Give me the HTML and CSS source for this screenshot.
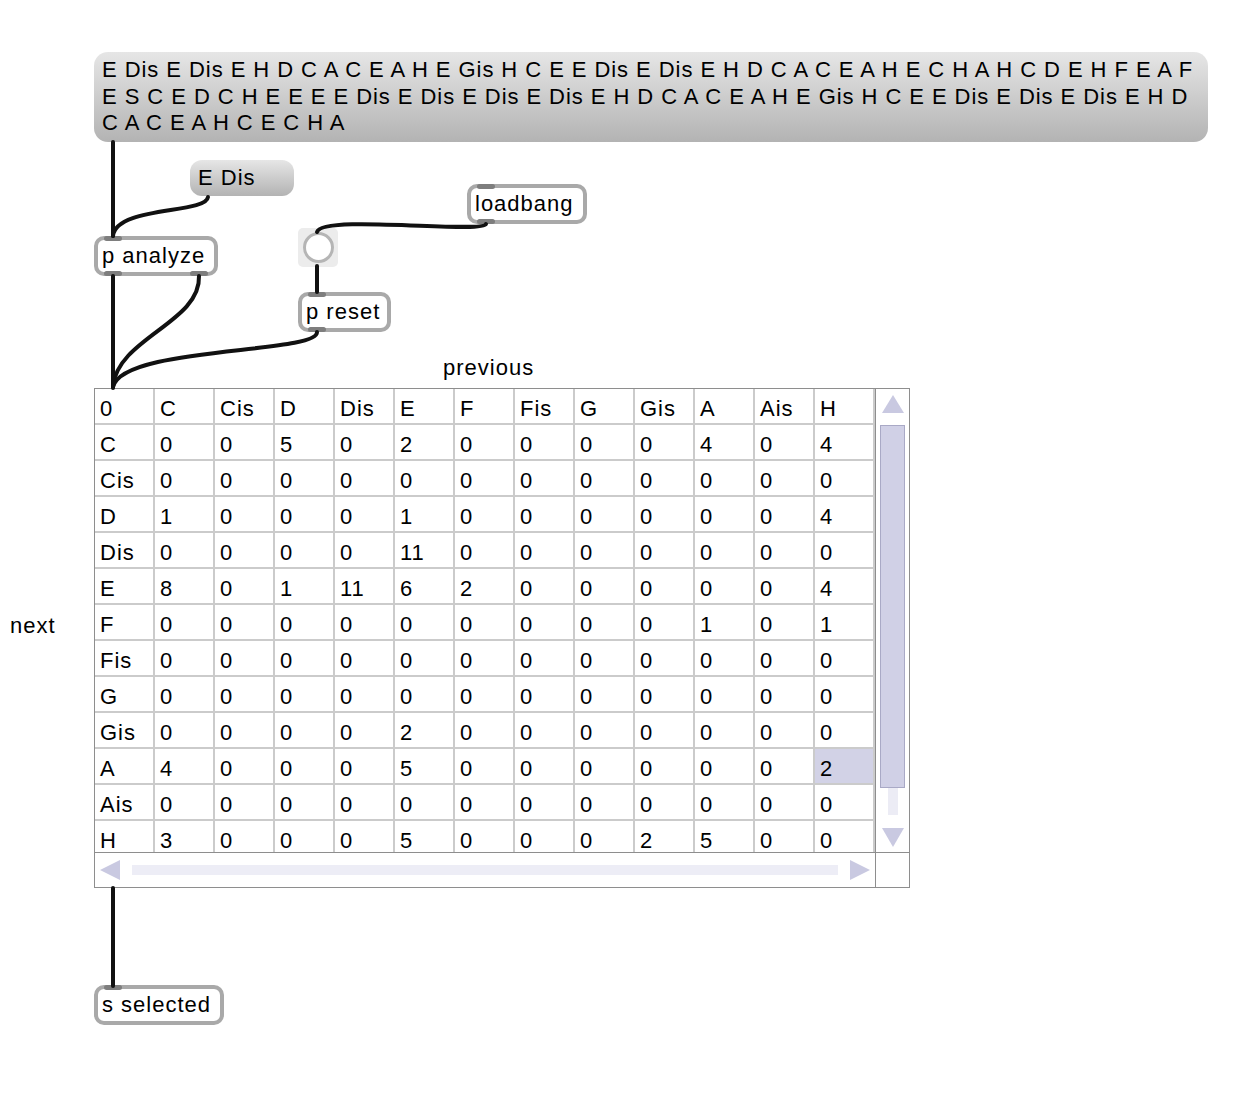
FILE: index.html
```html
<!DOCTYPE html>
<html>
<head>
<meta charset="utf-8">
<link rel="stylesheet" href="styles.css">
</head>
<body>
<div class="patch">
  <div class="msg msg-main">E Dis E Dis E H D C A C E A H E Gis H C E E Dis E Dis E H D C A C E A H E C H A H C D E H F E A F<br>E S C E D C H E E E E Dis E Dis E Dis E Dis E H D C A C E A H E Gis H C E E Dis E Dis E Dis E H D<br>C A C E A H C E C H A</div>

  <div class="msg msg-edis">E Dis</div>

  <div class="obj obj-analyze"><span class="tab tab-in"></span>p analyze<span class="tab tab-out"></span><span class="tab tab-out tab-right"></span></div>
  <div class="obj obj-loadbang"><span class="tab tab-in"></span>loadbang<span class="tab tab-out"></span></div>
  <div class="bang"><span class="bang-circle"></span></div>
  <div class="obj obj-reset"><span class="tab tab-in"></span>p reset<span class="tab tab-out"></span></div>
  <div class="obj obj-selected"><span class="tab tab-in"></span>s selected</div>

  <div class="label label-prev">previous</div>
  <div class="label label-next">next</div>

  <div class="cellblock">
    <div class="cells">
      <div class="row"><span>0</span><span>C</span><span>Cis</span><span>D</span><span>Dis</span><span>E</span><span>F</span><span>Fis</span><span>G</span><span>Gis</span><span>A</span><span>Ais</span><span>H</span></div>
      <div class="row"><span>C</span><span>0</span><span>0</span><span>5</span><span>0</span><span>2</span><span>0</span><span>0</span><span>0</span><span>0</span><span>4</span><span>0</span><span>4</span></div>
      <div class="row"><span>Cis</span><span>0</span><span>0</span><span>0</span><span>0</span><span>0</span><span>0</span><span>0</span><span>0</span><span>0</span><span>0</span><span>0</span><span>0</span></div>
      <div class="row"><span>D</span><span>1</span><span>0</span><span>0</span><span>0</span><span>1</span><span>0</span><span>0</span><span>0</span><span>0</span><span>0</span><span>0</span><span>4</span></div>
      <div class="row"><span>Dis</span><span>0</span><span>0</span><span>0</span><span>0</span><span>11</span><span>0</span><span>0</span><span>0</span><span>0</span><span>0</span><span>0</span><span>0</span></div>
      <div class="row"><span>E</span><span>8</span><span>0</span><span>1</span><span>11</span><span>6</span><span>2</span><span>0</span><span>0</span><span>0</span><span>0</span><span>0</span><span>4</span></div>
      <div class="row"><span>F</span><span>0</span><span>0</span><span>0</span><span>0</span><span>0</span><span>0</span><span>0</span><span>0</span><span>0</span><span>1</span><span>0</span><span>1</span></div>
      <div class="row"><span>Fis</span><span>0</span><span>0</span><span>0</span><span>0</span><span>0</span><span>0</span><span>0</span><span>0</span><span>0</span><span>0</span><span>0</span><span>0</span></div>
      <div class="row"><span>G</span><span>0</span><span>0</span><span>0</span><span>0</span><span>0</span><span>0</span><span>0</span><span>0</span><span>0</span><span>0</span><span>0</span><span>0</span></div>
      <div class="row"><span>Gis</span><span>0</span><span>0</span><span>0</span><span>0</span><span>2</span><span>0</span><span>0</span><span>0</span><span>0</span><span>0</span><span>0</span><span>0</span></div>
      <div class="row"><span>A</span><span>4</span><span>0</span><span>0</span><span>0</span><span>5</span><span>0</span><span>0</span><span>0</span><span>0</span><span>0</span><span>0</span><span class="sel">2</span></div>
      <div class="row"><span>Ais</span><span>0</span><span>0</span><span>0</span><span>0</span><span>0</span><span>0</span><span>0</span><span>0</span><span>0</span><span>0</span><span>0</span><span>0</span></div>
      <div class="row"><span>H</span><span>3</span><span>0</span><span>0</span><span>0</span><span>5</span><span>0</span><span>0</span><span>0</span><span>2</span><span>5</span><span>0</span><span>0</span></div>
    </div>
    <div class="vscroll">
      <span class="tri tri-up"></span>
      <span class="vthumb"></span>
      <span class="vtrack"></span>
      <span class="tri tri-down"></span>
    </div>
    <div class="hscroll">
      <span class="tri tri-left"></span>
      <span class="htrack"></span>
      <span class="tri tri-right"></span>
    </div>
    <div class="corner"></div>
  </div>

  <svg class="cords" width="1240" height="1098" viewBox="0 0 1240 1098">
    <g fill="none" stroke="#111" stroke-width="4" stroke-linecap="round">
      <path d="M113,142 L113,236"/>
      <path d="M208,197 C206,214 116,206 113,236"/>
      <path d="M486,224 C482,234 322,214 317,232"/>
      <path d="M317,266 L317,292"/>
      <path d="M113,276 L113,388"/>
      <path d="M199,276 C201,322 118,338 113,386"/>
      <path d="M317,332 C318,354 122,346 113,387"/>
      <path d="M113,888 L113,986"/>
    </g>
  </svg>
</div>
</body>
</html>
```

FILE: styles.css
```css
html, body {
  margin: 0;
  padding: 0;
  background: #fff;
}

.patch {
  position: relative;
  width: 1240px;
  height: 1098px;
  font-family: "Liberation Sans", Arial, sans-serif;
  color: #000;
  overflow: hidden;
}

/* message boxes */
.msg {
  position: absolute;
  box-sizing: border-box;
  background: linear-gradient(#e6e6e6, #b3b3b3);
  white-space: nowrap;
  font-size: 22px;
  letter-spacing: 1px;
}

.msg-main {
  left: 94px;
  top: 52px;
  width: 1114px;
  height: 90px;
  border-radius: 14px;
  padding: 5px 8px;
  line-height: 26.5px;
  letter-spacing: 0.94px;
}

.msg-edis {
  left: 190px;
  top: 160px;
  width: 104px;
  height: 36px;
  border-radius: 12px;
  padding: 0 8px;
  line-height: 36px;
}

/* objects */
.obj {
  position: absolute;
  box-sizing: border-box;
  height: 40px;
  border: 4px solid #a9a9a9;
  border-radius: 10px;
  background: #fff;
  padding: 0 4px;
  font-size: 22px;
  letter-spacing: 1px;
  line-height: 32px;
  white-space: nowrap;
}

.tab {
  position: absolute;
  left: 6px;
  width: 18px;
  height: 5px;
  border-radius: 3px;
  background: #7e7e7e;
}

.tab-in { top: -4px; }
.tab-out { bottom: -4px; }
.tab-right { left: auto; right: 6px; }

.obj-analyze { left: 94px; top: 236px; width: 124px; }
.obj-loadbang { left: 467px; top: 184px; width: 120px; }
.obj-reset { left: 298px; top: 292px; width: 93px; }
.obj-selected { left: 94px; top: 985px; width: 130px; }

/* bang */
.bang {
  position: absolute;
  left: 298px;
  top: 228px;
  width: 40px;
  height: 39px;
  border-radius: 5px;
  background: #ececec;
  display: flex;
  align-items: center;
  justify-content: center;
}

.bang-circle {
  box-sizing: border-box;
  width: 31px;
  height: 31px;
  border-radius: 50%;
  border: 3.5px solid #b5b5b5;
  background: #fff;
}

/* labels */
.label {
  position: absolute;
  font-size: 22px;
  letter-spacing: 1px;
  line-height: 26px;
  white-space: nowrap;
}

.label-prev { left: 443px; top: 355px; }
.label-next { left: 10px; top: 613px; }

/* cellblock */
.cellblock {
  position: absolute;
  left: 94px;
  top: 388px;
  width: 816px;
  height: 500px;
  box-sizing: border-box;
  border: 1px solid #8e8e8e;
  display: grid;
  grid-template-columns: 780px 1fr;
  grid-template-rows: 463px 1fr;
  background: #fff;
}

.cells {
  overflow: hidden;
  font-size: 22px;
  letter-spacing: 1px;
}

.row {
  display: flex;
}

.row span {
  flex: 0 0 60px;
  box-sizing: border-box;
  height: 36px;
  padding: 5px 0 0 5px;
  line-height: 30px;
  border-right: 2px solid #cbcbcb;
  border-bottom: 2px solid #cbcbcb;
  white-space: nowrap;
}

.row span.sel {
  background: #d2d2e6;
}

.vscroll {
  border-left: 1px solid #8e8e8e;
  display: flex;
  flex-direction: column;
  align-items: center;
  padding-top: 6px;
}

.vthumb {
  box-sizing: border-box;
  margin-top: 12px;
  width: 25px;
  height: 363px;
  background: #d0d0e6;
  border: 1px solid #a9a9c6;
}

.vtrack {
  width: 10px;
  height: 27px;
  background: #ececf5;
}

.hscroll {
  border-top: 1px solid #8e8e8e;
  display: flex;
  align-items: center;
  padding-left: 5px;
}

.htrack {
  margin: 0 12px;
  width: 706px;
  height: 10px;
  background: #ededf6;
}

.corner {
  border-top: 1px solid #8e8e8e;
  border-left: 1px solid #8e8e8e;
}

.tri {
  width: 0;
  height: 0;
  display: block;
}

.tri-up {
  border-left: 11px solid transparent;
  border-right: 11px solid transparent;
  border-bottom: 18px solid #c9c9e1;
}

.tri-down {
  margin-top: 13px;
  border-left: 11px solid transparent;
  border-right: 11px solid transparent;
  border-top: 19px solid #c9c9e1;
}

.tri-left {
  border-top: 10px solid transparent;
  border-bottom: 10px solid transparent;
  border-right: 20px solid #c9c9e1;
}

.tri-right {
  border-top: 10px solid transparent;
  border-bottom: 10px solid transparent;
  border-left: 20px solid #c9c9e1;
}

.cords {
  position: absolute;
  left: 0;
  top: 0;
  pointer-events: none;
}
```
